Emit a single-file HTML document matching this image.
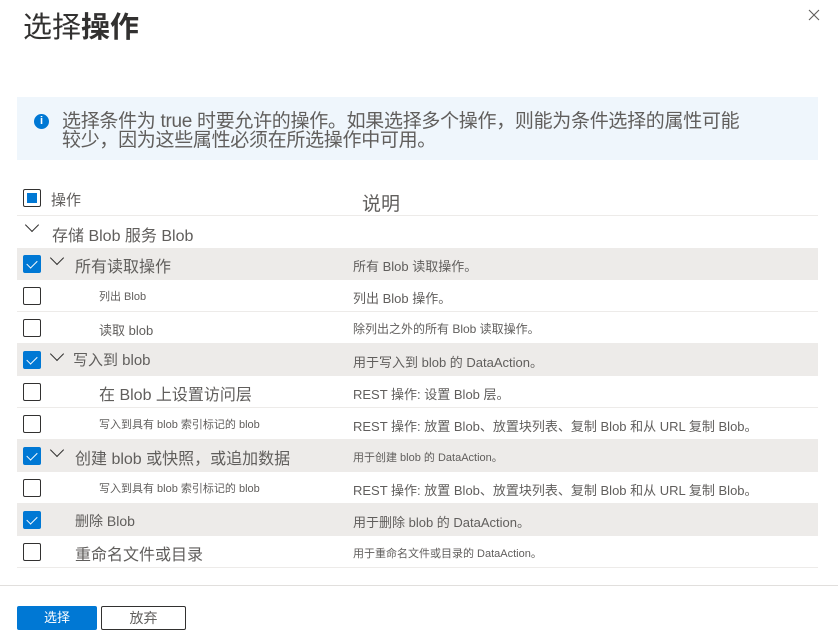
<!DOCTYPE html>
<html><head><meta charset="utf-8"><style>
*{margin:0;padding:0;box-sizing:border-box}
body{width:838px;height:640px;background:#fff;font-family:"Liberation Sans","Noto Sans CJK SC",sans-serif;color:#605e5c;position:relative;overflow:hidden}
.a{position:absolute;white-space:nowrap}
.row{position:absolute;left:17px;width:801px;height:32px;border-bottom:1px solid #edebe9}
.g{background:#edebe9}
.cb{position:absolute;left:6px;top:7px;width:18px;height:18px;border:1px solid #323130;border-radius:2px;background:#fff}
.cb.on{background:#0078d4;border-color:#0078d4}
.cb.on::after{content:"";position:absolute;left:5px;top:2px;width:5px;height:9px;border:solid #fff;border-width:0 1.5px 1.5px 0;transform:rotate(45deg)}
.chev{position:absolute;width:10px;height:10px;border:solid #323130;border-width:0 1.3px 1.3px 0;transform:rotate(45deg)}
.t{position:absolute;top:5px;font-size:15px}
.d{position:absolute;left:336px;top:8px;font-size:13px}
</style></head><body>
<div class="a" style="left:23px;top:4px;font-size:29px;color:#323130">选择<span style="font-weight:600">操作</span></div>
<svg class="a" style="left:808px;top:9px" width="12" height="12" viewBox="0 0 12 12"><path d="M1 1L11 11M11 1L1 11" stroke="#605e5c" stroke-width="1.1"/></svg>
<div class="a" style="left:17px;top:97px;width:801px;height:63px;background:#eff6fc"></div>
<div class="a" style="left:34px;top:114px;width:15px;height:15px;border-radius:50%;background:#0078d4;color:#fff;font-size:11px;font-weight:bold;text-align:center;line-height:15px">i</div>
<div class="a" style="left:62px;top:112px;font-size:19px;line-height:19px;letter-spacing:-0.3px;color:#605e5c">选择条件为 true 时要允许的操作。如果选择多个操作，则能为条件选择的属性可能<br>较少，因为这些属性必须在所选操作中可用。</div>
<div class="a" style="left:23px;top:189px;width:18px;height:18px;border:1px solid #323130;border-radius:2px"><div style="position:absolute;left:3px;top:3px;width:10px;height:10px;background:#0078d4"></div></div>
<div class="a" style="left:51px;top:189px;font-size:15px">操作</div>
<div class="a" style="left:362px;top:189px;font-size:19px">说明</div>
<div class="a" style="left:17px;top:215px;width:801px;height:1px;background:#edebe9"></div>
<div class="chev" style="left:27px;top:220px"></div>
<div class="a" style="left:52px;top:222px;font-size:16px">存储 Blob 服务 Blob</div>

<div class="row g" style="top:248px"><div class="cb on"></div><div class="chev" style="left:35px;top:5px"></div><div class="t" style="left:58px;font-size:16px">所有读取操作</div><div class="d">所有 Blob 读取操作。</div></div>
<div class="row" style="top:280px"><div class="cb"></div><div class="t" style="left:82px;top:8px;font-size:11px">列出 Blob</div><div class="d">列出 Blob 操作。</div></div>
<div class="row" style="top:312px"><div class="cb"></div><div class="t" style="left:82px;font-size:13px;top:8px">读取 blob</div><div class="d" style="font-size:12px">除列出之外的所有 Blob 读取操作。</div></div>
<div class="row g" style="top:344px"><div class="cb on"></div><div class="chev" style="left:35px;top:5px"></div><div class="t" style="left:56px">写入到 blob</div><div class="d">用于写入到 blob 的 DataAction。</div></div>
<div class="row" style="top:376px"><div class="cb"></div><div class="t" style="left:82px;font-size:16px">在 Blob 上设置访问层</div><div class="d">REST 操作: 设置 Blob 层。</div></div>
<div class="row" style="top:408px"><div class="cb"></div><div class="t" style="left:82px;font-size:11px;top:8px">写入到具有 blob 索引标记的 blob</div><div class="d">REST 操作: 放置 Blob、放置块列表、复制 Blob 和从 URL 复制 Blob。</div></div>
<div class="row g" style="top:440px"><div class="cb on"></div><div class="chev" style="left:35px;top:5px"></div><div class="t" style="left:58px;font-size:16px">创建 blob 或快照，或追加数据</div><div class="d" style="font-size:11px;top:9px">用于创建 blob 的 DataAction。</div></div>
<div class="row" style="top:472px"><div class="cb"></div><div class="t" style="left:82px;font-size:11px;top:8px">写入到具有 blob 索引标记的 blob</div><div class="d">REST 操作: 放置 Blob、放置块列表、复制 Blob 和从 URL 复制 Blob。</div></div>
<div class="row g" style="top:504px"><div class="cb on"></div><div class="t" style="left:58px;font-size:14px;top:7px">删除 Blob</div><div class="d">用于删除 blob 的 DataAction。</div></div>
<div class="row" style="top:536px"><div class="cb"></div><div class="t" style="left:58px;font-size:16px">重命名文件或目录</div><div class="d" style="font-size:11px;top:9px">用于重命名文件或目录的 DataAction。</div></div>

<div class="a" style="left:0;top:585px;width:838px;height:1px;background:#e1dfdd"></div>
<div class="a" style="left:17px;top:606px;width:80px;height:24px;background:#0078d4;border-radius:2px;color:#fff;font-size:13px;text-align:center;line-height:24px">选择</div>
<div class="a" style="left:101px;top:606px;width:85px;height:24px;border:1px solid #323130;border-radius:2px;font-size:14px;text-align:center;line-height:22px">放弃</div>
</body></html>
